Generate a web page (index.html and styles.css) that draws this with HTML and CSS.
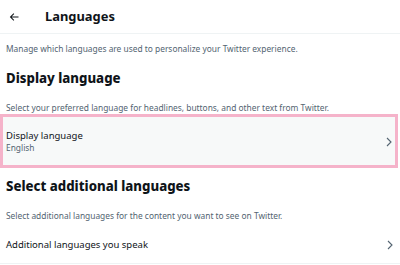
FILE: index.html
```html
<!DOCTYPE html>
<html>
<head>
<meta charset="utf-8">
<link rel="stylesheet" href="styles.css">
</head>
<body>
<div class="page">
  <header class="topbar">
    <svg class="back" viewBox="0 0 24 24" width="12" height="12"><path d="M7.414 13l5.043 5.04-1.414 1.42L3.586 12l7.457-7.46 1.414 1.42L7.414 11H21v2H7.414z"/></svg>
    <h1 class="title">Languages</h1>
  </header>
  <p class="intro">Manage which languages are used to personalize your Twitter experience.</p>
  <h2 class="section">Display language</h2>
  <p class="hint">Select your preferred language for headlines, buttons, and other text from Twitter.</p>
  <div class="row selected">
    <div class="rowtext">
      <div class="label">Display language</div>
      <div class="sub">English</div>
    </div>
    <svg class="chev" viewBox="0 0 6 10" width="6" height="10"><polyline points="1,1 5,5 1,9"/></svg>
  </div>
  <h2 class="section second">Select additional languages</h2>
  <p class="hint second">Select additional languages for the content you want to see on Twitter.</p>
  <div class="row plain">
    <div class="rowtext">
      <div class="label">Additional languages you speak</div>
    </div>
    <svg class="chev" viewBox="0 0 6 10" width="6" height="10"><polyline points="1,1 5,5 1,9"/></svg>
  </div>
</div>
</body>
</html>
```
FILE: styles.css
```css
html, body { margin: 0; padding: 0; background: #fff; }
body { font-family: "Noto Sans", "Open Sans", sans-serif; color: #0f1419; width: 400px; height: 265px; overflow: hidden; }
.page { display: flex; flex-direction: column; }
.topbar { display: flex; align-items: center; height: 34px; border-bottom: 1px solid #eff3f4; padding-left: 8px; box-sizing: border-box; }
.back { fill: #0f1419; }
.title { margin: 0 0 0 25px; font-size: 12.9px; font-weight: 700; line-height: 33px; }
.intro { margin: 0; padding: 7.5px 6px 0; font-size: 8.4px; color: #536471; line-height: 13px; }
.section { margin: 0; padding: 14.5px 6px 0; font-size: 13.2px; font-weight: 800; line-height: 18px; }
.section.second { padding-top: 9px; }
.hint { margin: 0; padding: 14px 6px 0; font-size: 8.4px; color: #536471; line-height: 13px; }
.hint.second { padding-top: 13.5px; }
.row { display: flex; align-items: center; justify-content: space-between; box-sizing: border-box; }
.row.selected { width: 398px; height: 54px; background: #f7f9f9; border: 3px solid #f5b3ca; padding: 1px 3px 0 3px; }
.row.plain { height: 42px; padding: 5px 7px 0 6px; border-bottom: 1px solid #eff3f4; }
.label { font-size: 9.5px; line-height: 12px; color: #0f1419; }
.sub { font-size: 8.4px; line-height: 11px; color: #536471; }
.chev { fill: none; stroke: #536471; stroke-width: 1.1; }
```
